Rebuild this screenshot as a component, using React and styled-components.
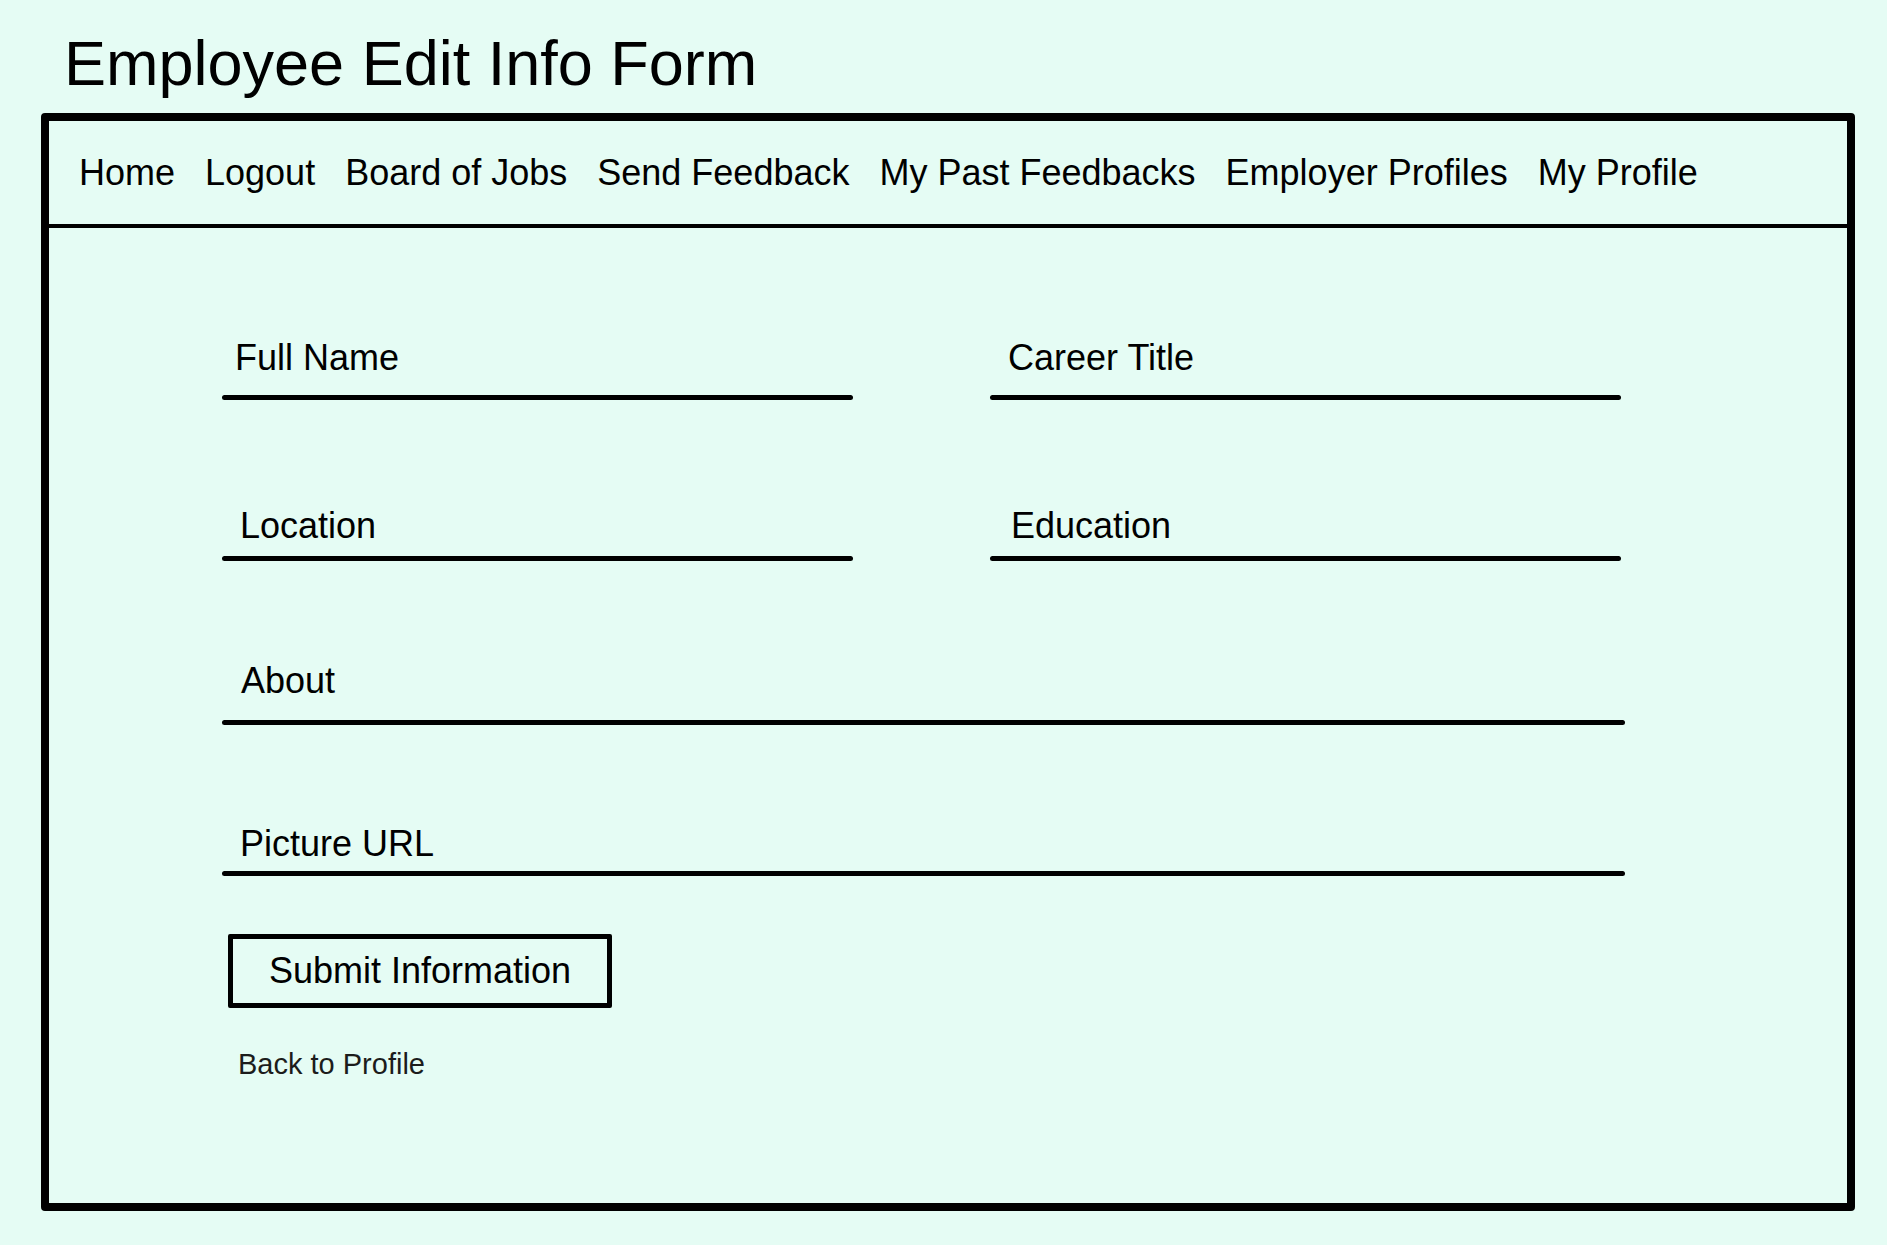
import React from 'react'
import styled, { createGlobalStyle } from 'styled-components'

const colors = {
  mint: '#e5fcf4',
  ink: '#000000',
  soft: '#1c1c1c',
}

const GlobalStyle = createGlobalStyle`
  body {
    margin: 0;
    background: ${colors.mint};
    font-family: 'Liberation Sans', Arial, sans-serif;
    color: ${colors.ink};
  }
`

const navLinks = [
  'Home',
  'Logout',
  'Board of Jobs',
  'Send Feedback',
  'My Past Feedbacks',
  'Employer Profiles',
  'My Profile',
]

const App = () => {
  return (
    <Page>
      <GlobalStyle />
      <Title>Employee Edit Info Form</Title>

      <Frame>
        <Nav>
          {navLinks.map((link) => (
            <NavLink key={link}>{link}</NavLink>
          ))}
        </Nav>

        <Form onSubmit={(e) => e.preventDefault()}>
          <FieldGrid>
            <Field indent={13} gap={17}>
              <Label>Full Name</Label>
              <Underline />
            </Field>
            <Field indent={18} gap={17}>
              <Label>Career Title</Label>
              <Underline />
            </Field>

            <Field indent={18} gap={10} top={106}>
              <Label>Location</Label>
              <Underline />
            </Field>
            <Field indent={21} gap={10} top={106}>
              <Label>Education</Label>
              <Underline />
            </Field>

            <Field wide indent={19} gap={19} top={100}>
              <Label>About</Label>
              <Underline />
            </Field>

            <Field wide indent={18} gap={7} top={99}>
              <Label>Picture URL</Label>
              <Underline />
            </Field>
          </FieldGrid>

          <SubmitBtn type="submit">Submit Information</SubmitBtn>
          <BackLink>Back to Profile</BackLink>
        </Form>
      </Frame>
    </Page>
  )
}

const Page = styled.div`
  padding: 27px 32px 34px 41px;
`

const Title = styled.h1`
  margin: 0 0 14px 23px;
  font-size: 63px;
  line-height: 72px;
  font-weight: 400;
`

const Frame = styled.div`
  width: 1814px;
  box-sizing: border-box;
  border: 8px solid ${colors.ink};
  border-radius: 4px;
`

const Nav = styled.nav`
  display: flex;
  align-items: center;
  gap: 30px;
  height: 103px;
  padding-left: 30px;
  border-bottom: 4px solid ${colors.ink};
`

const NavLink = styled.a`
  font-size: 36px;
  line-height: 40px;
  color: ${colors.ink};
  text-decoration: none;
  cursor: pointer;
  white-space: nowrap;
`

const Form = styled.form`
  display: flex;
  flex-direction: column;
  align-items: flex-start;
  padding: 110px 0 123px 173px;
`

const FieldGrid = styled.div`
  display: grid;
  grid-template-columns: 631px 631px;
  column-gap: 137px;
`

const Field = styled.div`
  display: flex;
  flex-direction: column;
  grid-column: ${(p) => (p.wide ? '1 / -1' : 'auto')};
  width: ${(p) => (p.wide ? '1403px' : 'auto')};
  margin-top: ${(p) => p.top || 0}px;

  & > span {
    padding-left: ${(p) => p.indent}px;
  }
  & > div {
    margin-top: ${(p) => p.gap}px;
  }
`

const Label = styled.span`
  font-size: 36px;
  line-height: 40px;
`

const Underline = styled.div`
  height: 5px;
  border-radius: 2.5px;
  background: ${colors.ink};
`

const SubmitBtn = styled.button`
  margin: 58px 0 0 6px;
  height: 74px;
  padding: 0 36px;
  box-sizing: border-box;
  border: 5px solid ${colors.ink};
  border-radius: 2px;
  background: transparent;
  font-family: 'Liberation Sans', Arial, sans-serif;
  font-size: 36px;
  color: ${colors.ink};
  cursor: pointer;
`

const BackLink = styled.a`
  margin: 40px 0 0 16px;
  font-size: 29px;
  line-height: 32px;
  color: ${colors.soft};
  cursor: pointer;
`

export default App
